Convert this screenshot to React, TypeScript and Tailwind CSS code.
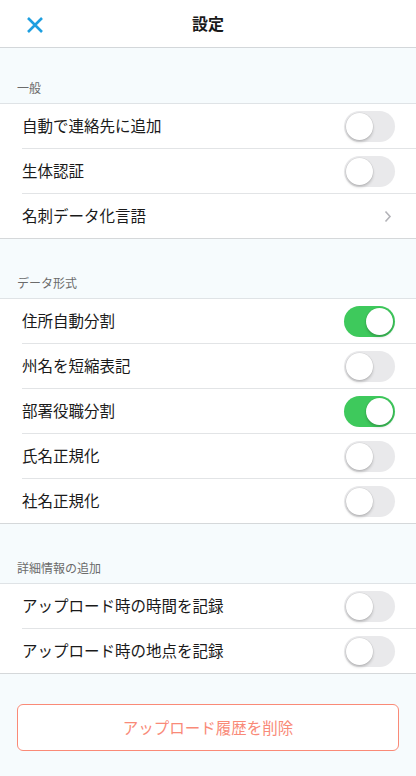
import React from "react";

const font = { fontFamily: '"Noto Sans CJK JP", "Noto Sans", sans-serif' };

function Toggle({ on }: { on: boolean }) {
  return (
    <div
      className={`relative w-[51px] h-[31px] rounded-full ${on ? "bg-[#3ec95c]" : "bg-[#e9e9eb]"}`}
    >
      <div
        className={`absolute top-[2px] w-[27px] h-[27px] rounded-full bg-white shadow-[0_2px_3px_rgba(0,0,0,0.2),0_0_0_0.5px_rgba(0,0,0,0.08)] ${on ? "left-[22px]" : "left-[2px]"}`}
      />
    </div>
  );
}

type Row = { label: string; toggle?: boolean; chevron?: boolean };

function Section({ title, rows, h }: { title: string; rows: Row[]; h: string }) {
  return (
    <div>
      <div className={`${h} flex items-end pl-[17px] pb-[7px] border-b border-[#dfe3e6]`}>
        <span className="text-[12px] text-[#6b6b6b] leading-[16px]">{title}</span>
      </div>
      <div className="bg-white border-b border-[#d5d8da]">
        {rows.map((r, i) => (
          <div key={r.label} className="pl-[22px]">
            <div
              className={`flex items-center justify-between pr-[21px] ${i < rows.length - 1 ? "h-[45px] border-b border-[#e2e4e6]" : "h-[44px]"}`}
            >
              <span className="text-[15.5px] text-[#1a1a1a]">{r.label}</span>
              {r.chevron ? (
                <svg width="8" height="13" viewBox="0 0 8 13" className="mr-[3px]">
                  <path d="M1.5 1.5 L6 6.5 L1.5 11.5" fill="none" stroke="#b3b3b8" strokeWidth="1.6" />
                </svg>
              ) : (
                <Toggle on={!!r.toggle} />
              )}
            </div>
          </div>
        ))}
      </div>
    </div>
  );
}

export default function App() {
  return (
    <div className="w-[416px] h-[776px] bg-[#f6fbfd] overflow-hidden" style={font}>
      <div className="h-[48px] bg-white border-b border-[#d3d7da] relative flex items-center justify-center">
        <svg width="18" height="18" viewBox="0 0 18 18" className="absolute left-[26px] top-[16px]">
          <path d="M2 2 L16 16 M16 2 L2 16" stroke="#1e9fe0" strokeWidth="2.6" strokeLinecap="butt" />
        </svg>
        <span className="text-[16px] font-bold text-[#1a1a1a] mt-[-2px]">設定</span>
      </div>
      <Section
        title="一般"
        h="h-[56px]"
        rows={[
          { label: "自動で連絡先に追加" },
          { label: "生体認証" },
          { label: "名刺データ化言語", chevron: true },
        ]}
      />
      <Section
        title="データ形式"
        h="h-[60px]"
        rows={[
          { label: "住所自動分割", toggle: true },
          { label: "州名を短縮表記" },
          { label: "部署役職分割", toggle: true },
          { label: "氏名正規化" },
          { label: "社名正規化" },
        ]}
      />
      <Section
        title="詳細情報の追加"
        h="h-[60px]"
        rows={[{ label: "アップロード時の時間を記録" }, { label: "アップロード時の地点を記録" }]}
      />
      <div className="px-[17px] pt-[30px]">
        <div className="h-[47px] rounded-[6px] border-[1.5px] border-[#fa8a77] bg-white flex items-center justify-center">
          <span className="text-[15.5px] text-[#f98a78]">アップロード履歴を削除</span>
        </div>
      </div>
    </div>
  );
}
